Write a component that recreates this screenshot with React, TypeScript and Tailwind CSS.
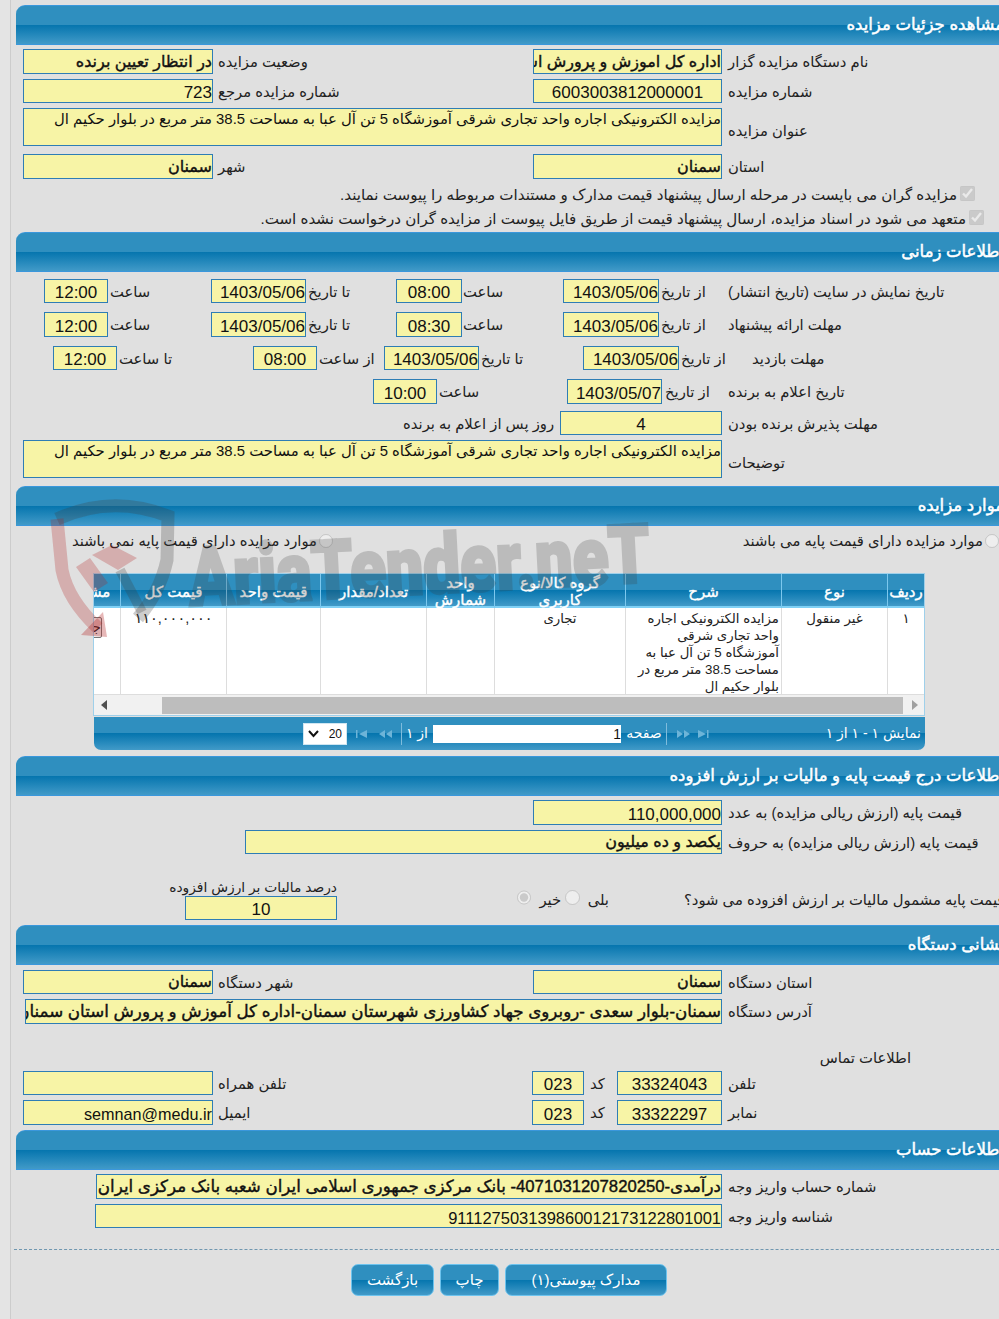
import type { ReactNode } from "react";

const blueBar = "bg-[linear-gradient(to_bottom,#2f8fbf_0%,#2f8fbf_50%,#0575ae_50%,#419ac8_100%)]";
const titleText = "مزایده الکترونیکی اجاره واحد تجاری شرقی آموزشگاه 5 تن آل عبا به مساحت 38.5 متر مربع در بلوار حکیم ال";

function Head({ title }: { title: string }) {
  return (
    <div dir="rtl" className={`h-[40px] w-[1000px] rounded-tl-[9px] border-y border-[#3a97dc] pr-[12px] flex items-center text-[16.5px] [-webkit-text-stroke:0.5px_#ffffff] text-white whitespace-nowrap ${blueBar}`}>
      <span className="-mt-[1px]">{title}</span>
    </div>
  );
}

function Field({ className, children, bold, center }: { className: string; children?: ReactNode; bold?: boolean; center?: boolean }) {
  return (
    <div dir="rtl" className={`shrink-0 h-full border border-[#2e7db5] bg-[#f7f4a6] overflow-hidden whitespace-nowrap flex items-center text-[#111] ${bold ? "text-[16px] [-webkit-text-stroke:0.4px_#111111]" : "text-[17px]"} ${center ? "justify-center" : ""} ${className}`}>
      <span className={bold ? "" : "mt-[4px]"}>{children}</span>
    </div>
  );
}

function Area({ children }: { children: ReactNode }) {
  return (
    <div dir="rtl" className="shrink-0 w-[699px] h-full border border-[#2e7db5] bg-[#f7f4a6] overflow-hidden whitespace-nowrap text-[14.87px] leading-[20px] text-[#111]">
      {children}
    </div>
  );
}

function Lbl({ className = "", children }: { className?: string; children: ReactNode }) {
  return (
    <div dir="rtl" className={`shrink-0 h-full flex items-center justify-end whitespace-nowrap text-[14.8px] text-[#222] ${className}`}>
      <span className="mt-[2px]">{children}</span>
    </div>
  );
}

function Arrow({ dir }: { dir: "first" | "prev" | "next" | "last" }) {
  const d = {
    first: "M1 1h1.5v8H1zM12 1v8L4 5z",
    prev: "M7 1v8L1 5zM14 1v8L8 5z",
    next: "M1 1v8l6-4zM8 1v8l6-4z",
    last: "M1 1v8l8-4zM10 1h1.5v8H10z",
  }[dir];
  return (
    <svg width="15" height="10" viewBox="0 0 15 10" className="shrink-0">
      <path d={d} fill="#6db4d8" />
    </svg>
  );
}

function Watermark() {
  return (
    <svg className="absolute left-0 top-0 pointer-events-none" width="999" height="700" viewBox="0 0 999 700">
      <path d="M57 519Q112 494 168 516L167 560Q160 592 138 618" fill="none" stroke="#3c3c3c" strokeOpacity=".26" strokeWidth="13" />
      <path d="M57 519L62 570Q68 600 98 628" fill="none" stroke="#b02020" strokeOpacity=".26" strokeWidth="13" />
      <path d="M81 635L107 637L103 612Z" fill="#b02020" fillOpacity=".32" />
      <path d="M76 567L90 558L108 583L94 592ZM92 555L112 545L137 558L118 570Z" fill="#b02020" fillOpacity=".26" />
      <path d="M120 570L142 612" fill="none" stroke="#3c3c3c" strokeOpacity=".26" strokeWidth="10" />
      <text x="190" y="606" transform="rotate(-3 190 606)" textLength="462" lengthAdjust="spacingAndGlyphs" fontFamily="Roboto, sans-serif" fontWeight="900" fontSize="82" fill="#3c3c3c" stroke="#3c3c3c" strokeWidth="3" opacity=".22">
        AriaTender.neT
      </text>
    </svg>
  );
}

function Table() {
  const cols = "grid grid-cols-[37px_106px_156px_131px_68px_106px_94px_106px_70px]";
  const th = "flex items-center justify-center text-center border-l border-[#7cc8ee] leading-[17px] px-1 pb-[2px]";
  const td = "border-l border-[#dddddd] text-center text-[13.3px] text-[#222] leading-[17px] pt-[2px]";
  const heads = ["ردیف", "نوع", "شرح", "گروه کالا/نوع کاربری", "واحد شمارش", "تعداد/مقدار", "قیمت واحد", "قیمت کل", "مشاهده"];
  return (
    <div className="ml-[77px] w-[832px]">
      <div className="border border-[#9fd0ea] bg-white">
        <div dir="rtl" className="w-[830px] overflow-hidden">
          <div className={`${cols} w-[874px] h-[34px] border-b-2 border-[#7fd0f5] text-[15px] [-webkit-text-stroke:0.4px_#ffffff] text-white ${blueBar}`}>
            {heads.map((h) => (
              <div key={h} className={th}>{h}</div>
            ))}
          </div>
          <div className={`${cols} w-[874px] h-[87px] border-b border-[#dddddd]`}>
            <div className={td}>۱</div>
            <div className={td}>غیر منقول</div>
            <div className={`${td} text-right pr-[2px] overflow-hidden`}>مزایده الکترونیکی اجاره واحد تجاری شرقی آموزشگاه 5 تن آل عبا به مساحت 38.5 متر مربع در بلوار حکیم ال</div>
            <div className={td}>تجاری</div>
            <div className={td}></div>
            <div className={td}></div>
            <div className={td}></div>
            <div className={`${td} !text-[14.5px]`}>۱۱۰,۰۰۰,۰۰۰</div>
            <div className="pt-[7px] pr-[18px]">
              <button className="w-[34px] h-[21px] border border-[#777] rounded-[2px] bg-[#f0f0f0] text-[14px] text-[#222] leading-none overflow-hidden whitespace-nowrap">جزئیات</button>
            </div>
          </div>
        </div>
        <div className="h-[20px] bg-[#f1f1f1] flex items-center">
          <div className="w-[68px] flex items-center pl-[7px]">
            <svg width="6" height="10" viewBox="0 0 6 10"><path d="M6 0v10L0 5z" fill="#505050" /></svg>
          </div>
          <div className="w-[741px] h-[17px] bg-[#bdbdbd]"></div>
          <div className="flex-1 flex items-center pl-[9px]">
            <svg width="6" height="10" viewBox="0 0 6 10"><path d="M0 0v10l6-5z" fill="#a0a0a0" /></svg>
          </div>
        </div>
      </div>
      <div className={`ml-[1px] mt-[1px] w-[831px] h-[33px] rounded-b-[7px] flex items-center text-[14px] text-white whitespace-nowrap ${blueBar}`}>
        <div className="ml-[209px] w-[44px] h-[22px] bg-white border border-[#cfe6f2] flex items-center justify-between px-[4px] text-[#111]">
          <svg width="11" height="8" viewBox="0 0 11 8"><path d="M1 1l4.5 5L10 1" fill="none" stroke="#111" strokeWidth="2" /></svg>
          <span className="text-[12px]">20</span>
        </div>
        <div className="ml-[8px] w-[46px] flex items-center gap-[8px]"><Arrow dir="first" /><Arrow dir="prev" /></div>
        <div className="w-[1px] h-[22px] bg-[#7fbcdc]"></div>
        <div dir="rtl" className="ml-[6px] w-[20px]">از ۱</div>
        <div dir="rtl" className="w-[188px] h-[18px] bg-white text-[#111] text-[14px] leading-[18px] ml-[5px]">1</div>
        <div dir="rtl" className="w-[36px] text-center ml-[5px]">صفحه</div>
        <div className="ml-[4px] w-[1px] h-[22px] bg-[#7fbcdc]"></div>
        <div className="ml-[9px] w-[46px] flex items-center gap-[6px]"><Arrow dir="next" /><Arrow dir="last" /></div>
        <div dir="rtl" className="ml-[103px] w-[96px] text-right">نمایش ۱ - ۱ از ۱</div>
      </div>
    </div>
  );
}

function TimeRow({ a, b, c, d, label, h }: { a: string; b: string; c: string; d: string; label: string; h: string }) {
  return (
    <div className={`flex ml-[28px] ${h}`}>
      <Field className="w-[64px]" center>{a}</Field>
      <Lbl className="w-[103px] pl-[2px]">ساعت</Lbl>
      <Field className="w-[95px]">{b}</Field>
      <Lbl className="w-[90px] pl-[2px]">تا تاریخ</Lbl>
      <Field className="w-[66px]" center>{c}</Field>
      <Lbl className="w-[101px] pl-[1px]">ساعت</Lbl>
      <Field className="w-[96px]">{d}</Field>
      <Lbl className="w-[69px] pl-[2px]">از تاریخ</Lbl>
      <Lbl>{label}</Lbl>
    </div>
  );
}

export default function App() {
  return (
    <div className="w-[999px] h-[1319px] overflow-hidden bg-[#e4e4e4] font-['Liberation_Sans','DejaVu_Sans',sans-serif] relative">
      <div className="ml-[10px] h-full border-l border-[#cccccc] bg-[#e0e0e0] pl-[5px] pt-[5px]">
        <Head title="مشاهده جزئیات مزایده" />
        <div className="flex ml-[7px] mt-[4px] h-[25px]">
          <Field className="w-[190px]" bold>در انتظار تعیین برنده</Field>
          <Lbl className="w-[320px] pl-[5px]">وضعیت مزایده</Lbl>
          <Field className="w-[189px]" bold>اداره کل اموزش و پرورش استان سمنان</Field>
          <Lbl className="pl-[6px]">نام دستگاه مزایده گزار</Lbl>
        </div>
        <div className="flex ml-[7px] mt-[5px] h-[24px]">
          <Field className="w-[190px]">723</Field>
          <Lbl className="w-[320px] pl-[5px]">شماره مزایده مرجع</Lbl>
          <Field className="w-[189px]" center>6003003812000001</Field>
          <Lbl className="pl-[6px]">شماره مزایده</Lbl>
        </div>
        <div className="flex ml-[7px] mt-[5px] h-[38px]">
          <Area>{titleText}</Area>
          <Lbl className="pl-[6px] pt-[6px]">عنوان مزایده</Lbl>
        </div>
        <div className="flex ml-[7px] mt-[8px] h-[25px]">
          <Field className="w-[190px]" bold>سمنان</Field>
          <Lbl className="w-[320px] pl-[5px]">شهر</Lbl>
          <Field className="w-[189px]" bold>سمنان</Field>
          <Lbl className="pl-[6px]">استان</Lbl>
        </div>
        <div dir="rtl" className="mt-[4px] h-[24px] w-[959px] flex items-center gap-[3px] text-[15.1px] text-[#222] whitespace-nowrap">
          <input type="checkbox" checked disabled readOnly className="m-0 w-[15px] h-[15px] -mt-[4px]" />
          <span>مزایده گران می بایست در مرحله ارسال پیشنهاد قیمت مدارک و مستندات مربوطه را پیوست نمایند.</span>
        </div>
        <div dir="rtl" className="h-[24px] w-[968px] flex items-center gap-[3px] text-[15.1px] text-[#222] whitespace-nowrap">
          <input type="checkbox" checked disabled readOnly className="m-0 w-[15px] h-[15px] -mt-[4px]" />
          <span>متعهد می شود در اسناد مزایده، ارسال پیشنهاد قیمت از طریق فایل پیوست از مزایده گران درخواست نشده است.</span>
        </div>

        <div className="mt-[1px]"><Head title="اطلاعات زمانی" /></div>
        <div className="mt-[7px]">
          <TimeRow h="h-[24px]" a="12:00" b="1403/05/06" c="08:00" d="1403/05/06" label="تاریخ نمایش در سایت (تاریخ انتشار)" />
        </div>
        <div className="mt-[9px]">
          <TimeRow h="h-[25px]" a="12:00" b="1403/05/06" c="08:30" d="1403/05/06" label="مهلت ارائه پیشنهاد" />
        </div>
        <div className="flex ml-[37px] mt-[9px] h-[24px]">
          <Field className="w-[64px]" center>12:00</Field>
          <Lbl className="w-[136px] pl-[2px]">تا ساعت</Lbl>
          <Field className="w-[64px]" center>08:00</Field>
          <Lbl className="w-[67px] pl-[2px]">از ساعت</Lbl>
          <Field className="w-[95px]">1403/05/06</Field>
          <Lbl className="w-[104px] pl-[2px]">تا تاریخ</Lbl>
          <Field className="w-[96px]">1403/05/06</Field>
          <Lbl className="w-[49px] pl-[2px]">از تاریخ</Lbl>
          <Lbl className="pl-[24px]">مهلت بازدید</Lbl>
        </div>
        <div className="flex ml-[357px] mt-[9px] h-[25px]">
          <Field className="w-[64px]" center>10:00</Field>
          <Lbl className="w-[130px] pl-[2px]">ساعت</Lbl>
          <Field className="w-[95px]">1403/05/07</Field>
          <Lbl className="w-[66px] pl-[3px]">از تاریخ</Lbl>
          <Lbl>تاریخ اعلام به برنده</Lbl>
        </div>
        <div className="flex ml-[387px] mt-[7px] h-[24px]">
          <Lbl className="w-[157px]">روز پس از اعلام به برنده</Lbl>
          <Field className="w-[162px]" center>4</Field>
          <Lbl className="pl-[6px]">مهلت پذیرش برنده بودن</Lbl>
        </div>
        <div className="flex ml-[7px] mt-[5px] h-[38px]">
          <Area>{titleText}</Area>
          <Lbl className="pl-[6px] pt-[6px]">توضیحات</Lbl>
        </div>

        <div className="mt-[8px]"><Head title="موارد مزایده" /></div>
        <div className="h-[47px] flex pt-[5px] text-[14.8px] text-[#222] whitespace-nowrap">
          <label dir="rtl" className="ml-[54px] w-[265px] h-[20px] flex items-center gap-[2px]">
            <input type="radio" disabled className="m-0 w-[14px] h-[14px]" />
            <span>موارد مزایده دارای قیمت پایه نمی باشند</span>
          </label>
          <label dir="rtl" className="ml-[403px] w-[265px] h-[20px] flex items-center gap-[2px]">
            <input type="radio" disabled className="m-0 w-[14px] h-[14px] shrink-0" />
            <span>موارد مزایده دارای قیمت پایه می باشند</span>
          </label>
        </div>
        <Table />

        <div className="mt-[6px]"><Head title="اطلاعات درج قیمت پایه و مالیات بر ارزش افزوده" /></div>
        <div className="flex ml-[517px] mt-[4px] h-[25px]">
          <Field className="w-[189px]">110,000,000</Field>
          <Lbl className="pl-[6px]">قیمت پایه (ارزش ریالی مزایده) به عدد</Lbl>
        </div>
        <div className="flex ml-[229px] mt-[5px] h-[24px]">
          <Field className="w-[477px]" bold>یکصد و ده میلیون</Field>
          <Lbl className="pl-[6px]">قیمت پایه (ارزش ریالی مزایده) به حروف</Lbl>
        </div>
        <div className="flex items-end ml-[153px] mt-[24px] h-[42px] text-[14.8px] text-[#222] whitespace-nowrap">
          <div className="w-[168px] flex flex-col items-end">
            <div dir="rtl" className="h-[18px] leading-[20px] w-[168px] text-[13.8px]">درصد مالیات بر ارزش افزوده</div>
            <Field className="w-[152px] !h-[24px]" center>10</Field>
          </div>
          <div dir="rtl" className="ml-[180px] mb-[9px] w-[92px] flex items-center gap-[2px]">
            <span className="ml-[6px]">بلی</span>
            <input type="radio" disabled className="m-0 w-[15px] h-[15px] ml-[2px] -mt-[4px]" />
            <span className="ml-[6px]">خیر</span>
            <input type="radio" disabled defaultChecked className="m-0 w-[15px] h-[15px] -mt-[4px]" />
          </div>
          <div dir="rtl" className="ml-[75px] mb-[9px]">قیمت پایه مشمول مالیات بر ارزش افزوده می شود؟</div>
        </div>

        <div className="mt-[5px]"><Head title="نشانی دستگاه" /></div>
        <div className="flex ml-[7px] mt-[5px] h-[24px]">
          <Field className="w-[190px]" bold>سمنان</Field>
          <Lbl className="w-[320px] pl-[5px]">شهر دستگاه</Lbl>
          <Field className="w-[189px]" bold>سمنان</Field>
          <Lbl className="pl-[6px]">استان دستگاه</Lbl>
        </div>
        <div className="flex ml-[9px] mt-[5px] h-[25px]">
          <Field className="w-[697px] !text-[16.7px]" bold>سمنان-بلوار سعدی -روبروی جهاد کشاورزی شهرستان سمنان-اداره کل آموزش و پرورش استان سمنان</Field>
          <Lbl className="pl-[6px]">آدرس دستگاه</Lbl>
        </div>
        <div dir="rtl" className="ml-[804px] mt-[25px] h-[18px] w-[91px] text-[14.8px] leading-[18px] text-[#222] whitespace-nowrap text-left">اطلاعات تماس</div>
        <div className="flex ml-[7px] mt-[4px] h-[24px]">
          <Field className="w-[190px]"></Field>
          <Lbl className="w-[319px] pl-[5px]">تلفن همراه</Lbl>
          <Field className="w-[52px]" center>023</Field>
          <Lbl className="w-[33px] pl-[6px]">کد</Lbl>
          <Field className="w-[105px]" center>33324043</Field>
          <Lbl className="pl-[6px]">تلفن</Lbl>
        </div>
        <div className="flex ml-[7px] mt-[5px] h-[25px]">
          <Field className="w-[190px] !text-[16.2px]">semnan@medu.ir</Field>
          <Lbl className="w-[319px] pl-[5px]">ایمیل</Lbl>
          <Field className="w-[52px]" center>023</Field>
          <Lbl className="w-[33px] pl-[6px]">کد</Lbl>
          <Field className="w-[105px]" center>33322297</Field>
          <Lbl className="pl-[6px]">نمابر</Lbl>
        </div>

        <div className="mt-[5px]"><Head title="اطلاعات حساب" /></div>
        <div className="flex ml-[80px] mt-[4px] h-[25px]">
          <Field className="w-[626px] !text-[16.7px]" bold>درآمدی-4071031207820250- بانک مرکزی جمهوری اسلامی ایران شعبه بانک مرکزی ایران</Field>
          <Lbl className="pl-[6px]">شماره حساب واریز وجه</Lbl>
        </div>
        <div className="flex ml-[79px] mt-[5px] h-[24px]">
          <Field className="w-[627px] !text-[16.5px]">911127503139860012173122801001</Field>
          <Lbl className="pl-[6px]">شناسه واریز وجه</Lbl>
        </div>
        <div className="-ml-[2px] mt-[21px] border-t border-dashed border-[#6f97b0]"></div>
        <div className="flex ml-[335px] mt-[14px] h-[32px] gap-[6px] text-[15px] text-white">
          <button className={`w-[83px] rounded-[7px] border border-[#6cc3ee] ${blueBar}`}>بازگشت</button>
          <button className={`w-[59px] rounded-[7px] border border-[#6cc3ee] ${blueBar}`}>چاپ</button>
          <button className={`w-[162px] rounded-[7px] border border-[#6cc3ee] ${blueBar}`}>مدارک پیوستی(۱)</button>
        </div>
      </div>
      <Watermark />
    </div>
  );
}
